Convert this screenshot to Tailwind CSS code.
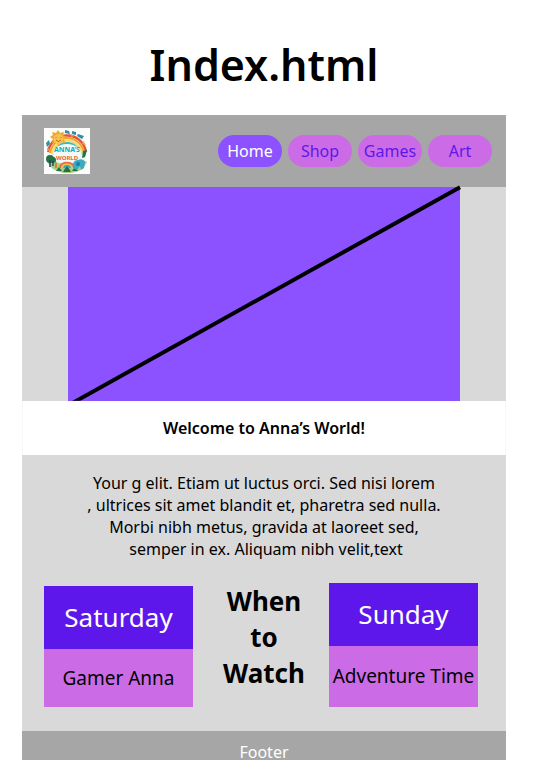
<!DOCTYPE html>
<html lang="en">
<head>
<meta charset="utf-8">
<meta name="viewport" content="width=device-width, initial-scale=1">
<title>Index.html</title>
<script src="https://cdn.jsdelivr.net/npm/@tailwindcss/browser@4"></script>
</head>
<body class="min-h-screen bg-white pl-[22px] pr-[49px] font-['Noto_Sans',sans-serif] text-black">
  <h1 class="pt-[35px] pb-[20px] text-center text-[43px] leading-[60px] font-semibold">Index.html</h1>
  <div class="bg-[#d9d9d9]">
    <header class="flex h-[72px] items-center justify-between bg-[#a6a6a6] pr-[14px] pl-[22px]">
      <a href="#" aria-label="Anna's World">
        <svg class="block size-[46px]" viewBox="0 0 46 46" aria-hidden="true">
          <rect width="46" height="46" fill="#fdfdfb"/>
          <circle cx="23" cy="23" r="20" fill="#e9f7f2"/>
          <g fill="none" stroke-width="2.200">
            <path d="M4 24C8 2 38 2 42 24" stroke="#e8503a" stroke-width="2.500"/>
            <path d="M6 25C10 5 36 5 40 25" stroke="#f6a12c"/>
            <path d="M8 26C12 8 34 8 38 26" stroke="#f4dc62"/>
            <path d="M10 27C13 11 33 11 36 27" stroke="#3ab8c1"/>
          </g>
          <g fill="#2d91a6"><path d="M21 2l4 1 1 3-5-1zM28 3l4 1v3l-4-1zM34 6l6 2-2 3-5-3z"/><path d="M2 15l3-3 1 4-3 3z"/></g>
          <g fill="#efa03d"><path d="M27 6l3 2-3 1zM39 13l3 4-4-1zM3 20l3 1-3 3z"/></g>
          <path d="M14 2l2 3 4-1-1 3 4 2-3 2 1 4-4-1-2 4-3-4-4 1 1-4-3-2 3-2-1-3 4 1z" fill="#f2a62d"/>
          <circle cx="14.500" cy="11" r="5" fill="#f8c34c"/>
          <path d="M12 12q2.500 3 5 0M12 9v1M17 9v1" stroke="#a65321" fill="none" stroke-width=".8"/>
          <ellipse cx="23" cy="25" rx="14" ry="9" fill="#f2fbf7"/>
          <path d="M3 33q6-3 11 2l9 1 9-1q6-5 11-1-4 10-16 11h-8Q6 42 3 33z" fill="#a9cf86"/>
          <g fill="#237247"><circle cx="6" cy="31" r="4"/><circle cx="9" cy="32" r="3"/><path d="M23 37l4 7h-8zM15 39l3 4h-6zM31 39l3 4h-6z"/><path d="M39 23l4-1-2 7-3 1z"/></g>
          <path d="M6 32v7M9 33v5" stroke="#294459" stroke-width="1.500"/>
          <g fill="none"><path d="M16 40c0-7 14-7 14 0" stroke="#e8654b" stroke-width="2"/><path d="M18 40c0-5 10-5 10 0" stroke="#f4bd43" stroke-width="1.500"/><path d="M20 40c0-3 6-3 6 0" stroke="#32a8c3" stroke-width="1.500"/></g>
          <path d="M29 40v-4q1-4 5-4 5-2 7 2l-1 6-3 2-1-4-3 4z" fill="#39abc5"/>
          <circle cx="34" cy="36" r="2" fill="#1d7fa0"/>
          <path d="M11 34l2 1v5h-2z" fill="#d8842d"/>
          <text x="23" y="24" text-anchor="middle" font-family="Noto Sans, sans-serif" font-weight="700" font-size="7" fill="#16a9b8">ANNA’S</text>
          <text x="23" y="32" text-anchor="middle" font-family="Noto Sans, sans-serif" font-weight="700" font-size="6" fill="#ee6337">WORLD</text>
        </svg>
      </a>
      <nav class="flex gap-[6px] text-center text-base leading-8 text-[#5e17eb]" aria-label="Main">
        <a href="#" aria-current="page" class="w-16 rounded-full bg-[#8c52ff] text-white">Home</a>
        <a href="#" class="w-16 rounded-full bg-[#cb6ce6]">Shop</a>
        <a href="#" class="w-16 rounded-full bg-[#cb6ce6]">Games</a>
        <a href="#" class="w-16 rounded-full bg-[#cb6ce6]">Art</a>
      </nav>
    </header>
    <main>
      <div class="mx-[46px] bg-[#8c52ff]">
        <svg class="block h-[214px] w-full overflow-visible" viewBox="0 0 393 214" aria-hidden="true">
          <path d="M5 216L393 0" clip-path="url(#hero)" stroke="#000" stroke-width="4" fill="none"/>
          <clipPath id="hero"><rect x="0" y="-4" width="397" height="218"/></clipPath>
        </svg>
      </div>
      <h2 class="border-x border-[#f8f8f8] bg-white text-center text-base leading-[54px] font-semibold">Welcome to Anna’s World!</h2>
      <p class="pt-[17px] text-center text-base leading-[22px]">Your g elit. Etiam ut luctus orci. Sed nisi lorem<br>, ultrices sit amet blandit et, pharetra sed nulla.<br>Morbi nibh metus, gravida at laoreet sed,<br>&nbsp;semper in ex. Aliquam nibh velit,text</p>
      <section class="flex items-end justify-between pt-[23px] pr-7 pb-6 pl-[22px] text-center">
        <article class="w-[149px]">
          <h3 class="bg-[#5e17eb] text-[26px] leading-[63px] text-white">Saturday</h3>
          <p class="bg-[#cb6ce6] text-[19px] leading-[58px]">Gamer Anna</p>
        </article>
        <h2 class="self-start pl-[6px] text-[26px] leading-[36px] font-bold">When<br>to<br>Watch</h2>
        <article class="w-[149px]">
          <h3 class="bg-[#5e17eb] text-[26px] leading-[63px] text-white">Sunday</h3>
          <p class="bg-[#cb6ce6] text-[19px] leading-[61px] whitespace-nowrap">Adventure Time</p>
        </article>
      </section>
    </main>
    <footer class="bg-[#a6a6a6] pt-[13px] text-center text-base leading-4 text-white">Footer</footer>
  </div>
</body>
</html>
